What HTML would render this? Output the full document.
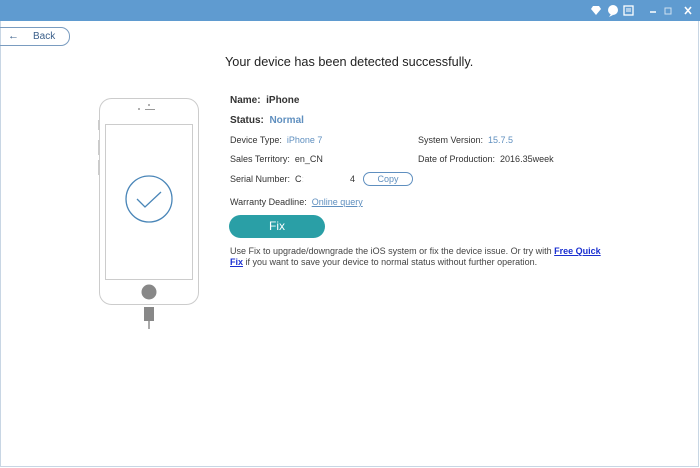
<!DOCTYPE html>
<html><head><style>
body{margin:0;width:700px;height:468px;overflow:hidden;background:#fff;font-family:"Liberation Sans",sans-serif;position:relative;font-size:9px;color:#333}
.tb{position:absolute;left:0;top:0;width:700px;height:21px;background:#5f9bd0}
.frame{position:absolute;left:0;top:21px;width:699px;height:446px;border-left:1px solid #c8d6e4;border-right:1px solid #c8d6e4;border-bottom:1px solid #c8d6e4;box-sizing:border-box}
.back{position:absolute;left:-12px;top:27px;width:80px;height:17px;border:1px solid #7a9cc0;border-radius:9px;color:#3a5f8a;font-size:10px;line-height:17px}
.t{position:absolute;white-space:nowrap}
.b{color:#5f8fbf}
</style></head><body>
<div class="tb">
<svg style="position:absolute;left:588px;top:4px" width="110" height="14">
<path d="M5 2h6l2 3-5 6-5-6z" fill="#fff"/>
<circle cx="25" cy="6" r="5" fill="#fff"/><path d="M23 10l-2 3 4-2z" fill="#fff"/>
<rect x="36" y="2" width="9" height="9" fill="none" stroke="#fff" stroke-width="1.3"/><path d="M38 5h5M38 7h5" stroke="#fff"/>
<path d="M62 8h6" stroke="#fff" stroke-width="1.5"/>
<rect x="77" y="4" width="6" height="6" fill="none" stroke="#fff" opacity=".7"/>
<path d="M97 3l6 7M103 3l-6 7" stroke="#fff" stroke-width="1.6"/>
</svg></div>
<div class="frame"></div>
<div class="back"><span style="position:absolute;left:19px;font-size:11px">←</span><span style="position:absolute;left:44px">Back</span></div>
<div class="t" style="left:225px;top:55px;font-size:12.7px;color:#222">Your device has been detected successfully.</div>
<svg style="position:absolute;left:95px;top:95px" width="110" height="240">
<rect x="4.5" y="3.5" width="99" height="206" rx="12" fill="none" stroke="#ccc"/>
<rect x="10.5" y="29.5" width="87" height="155" fill="none" stroke="#ccc"/>
<circle cx="54" cy="10" r="1" fill="#999"/><circle cx="44" cy="14" r="1" fill="#999"/><path d="M50 14.5h10" stroke="#999"/>
<path d="M3.5 25v10M3.5 45v15M3.5 65v15" stroke="#ccc"/>
<circle cx="54" cy="197" r="7.5" fill="#888"/>
<rect x="49" y="212" width="10" height="14" fill="#888"/><path d="M54 226v8" stroke="#aaa" stroke-width="2"/>
<circle cx="54" cy="104" r="23" fill="none" stroke="#4a86b8" stroke-width="1.3"/>
<path d="M42 104l8 8 16-15" fill="none" stroke="#4a86b8" stroke-width="1.3"/>
</svg>
<div class="t" style="left:230px;top:95px;font-weight:bold;font-size:10px">Name:&nbsp; iPhone</div>
<div class="t" style="left:230px;top:115px;font-weight:bold;font-size:10px">Status:&nbsp; <span class="b">Normal</span></div>
<div class="t" style="left:230px;top:135px">Device Type:&nbsp; <span class="b">iPhone 7</span></div>
<div class="t" style="left:418px;top:135px">System Version:&nbsp; <span class="b">15.7.5</span></div>
<div class="t" style="left:230px;top:154px">Sales Territory:&nbsp; en_CN</div>
<div class="t" style="left:418px;top:154px">Date of Production:&nbsp; 2016.35week</div>
<div class="t" style="left:230px;top:174px">Serial Number:&nbsp; C<span style="color:#ddd">:</span><span style="display:inline-block;width:46px"></span>4</div>
<div class="t" style="left:363px;top:172px;width:48px;height:12px;border:1px solid #5f8fbf;border-radius:7px;text-align:center;line-height:12px;color:#5f8fbf">Copy</div>
<div class="t" style="left:230px;top:197px">Warranty Deadline:&nbsp; <span class="b" style="text-decoration:underline">Online query</span></div>
<div class="t" style="left:229px;top:215px;width:96px;height:23px;background:#2a9fa6;border-radius:12px;color:#fff;font-size:12px;text-align:center;line-height:23px">Fix</div>
<div class="t" style="left:230px;top:246px;line-height:11px;color:#444">Use Fix to upgrade/downgrade the iOS system or fix the device issue. Or try with <b style="color:#1a2fd0;text-decoration:underline">Free Quick</b><br><b style="color:#1a2fd0;text-decoration:underline">Fix</b> if you want to save your device to normal status without further operation.</div>
</body></html>
